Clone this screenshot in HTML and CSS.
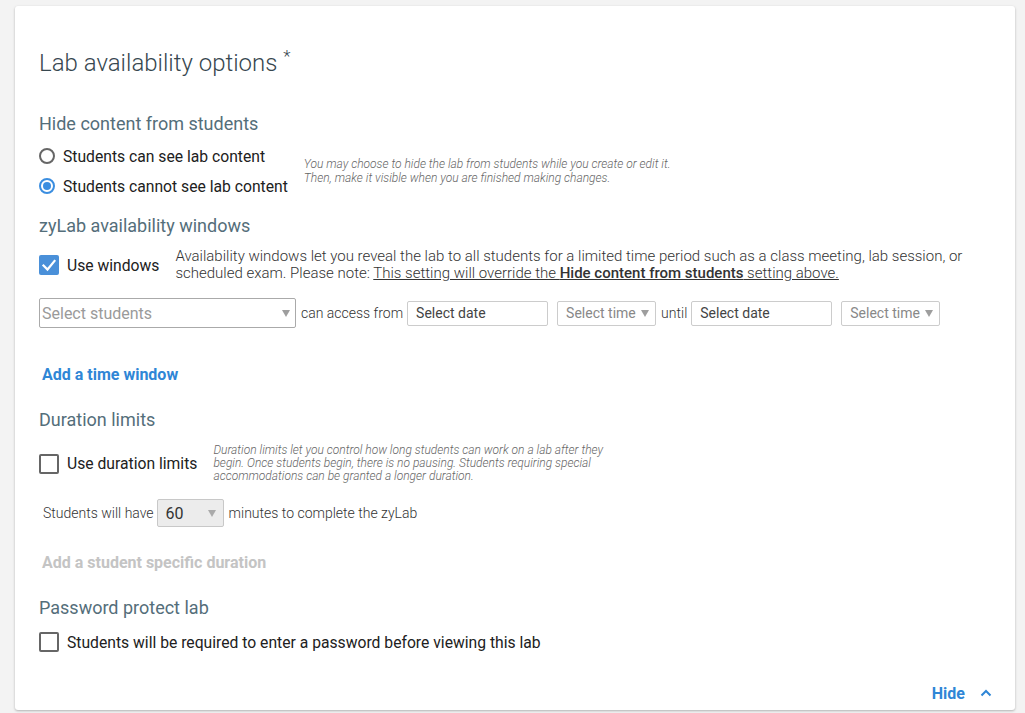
FILE: index.html
```html
<!DOCTYPE html>
<html lang="en">
<head>
<meta charset="utf-8">
<title>Lab availability options</title>
<link rel="stylesheet" href="styles.css">
</head>
<body>
<div class="card">
  <h1 class="title">Lab availability options <sup class="req">*</sup></h1>

  <h2 class="section-title first">Hide content from students</h2>
  <div class="hide-row">
    <div class="radios">
      <label class="radio"><span class="radio-circle"></span>Students can see lab content</label>
      <label class="radio"><span class="radio-circle checked"></span>Students cannot see lab content</label>
    </div>
    <p class="hint hint-hide">You may choose to hide the lab from students while you create or edit it.<br>Then, make it visible when you are finished making changes.</p>
  </div>

  <h2 class="section-title windows-title">zyLab availability windows</h2>
  <div class="windows-row">
    <label class="check"><span class="box checked"><svg viewBox="0 0 20 20" width="20" height="20"><polyline points="4.5,10.5 8.5,14.5 15.5,6" fill="none" stroke="#fff" stroke-width="2.2" stroke-linecap="square"/></svg></span>Use windows</label>
    <p class="desc">Availability windows let you reveal the lab to all students for a limited time period such as a class meeting, lab session, or scheduled exam. Please note: <span class="u">This setting will override the <b>Hide content from students</b> setting above.</span></p>
  </div>

  <div class="select-row">
    <div class="select students"><span>Select students</span><span class="arrow"></span></div>
    <span class="word">can access from</span>
    <div class="date">Select date</div>
    <div class="time"><span>Select time</span><span class="arrow"></span></div>
    <span class="word">until</span>
    <div class="date">Select date</div>
    <div class="time second"><span>Select time</span><span class="arrow"></span></div>
  </div>

  <a class="link add-window">Add a time window</a>

  <h2 class="section-title duration-title">Duration limits</h2>
  <div class="duration-row">
    <label class="check"><span class="box"></span>Use duration limits</label>
    <p class="hint hint-duration">Duration limits let you control how long students can work on a lab after they begin. Once students begin, there is no pausing. Students requiring special accommodations can be granted a longer duration.</p>
  </div>

  <div class="minutes-row">
    <span class="word">Students will have</span>
    <div class="minutes"><span>60</span><span class="arrow"></span></div>
    <span class="word">minutes to complete the zyLab</span>
  </div>

  <a class="link disabled add-duration">Add a student specific duration</a>

  <h2 class="section-title password-title">Password protect lab</h2>
  <label class="check password-check"><span class="box"></span>Students will be required to enter a password before viewing this lab</label>

  <div class="footer">
    <a class="link hide-link">Hide</a>
    <svg class="chevron" viewBox="0 0 12 8" width="12" height="8"><polyline points="1.5,6.5 6,2 10.5,6.5" fill="none" stroke="#2f86d6" stroke-width="2"/></svg>
  </div>
</div>
</body>
</html>
```

FILE: styles.css
```css
* { box-sizing: border-box; }

body {
  margin: 0;
  padding: 6px 10px 3px 15px;
  background: #f3f3f3;
  font-family: Roboto, "Liberation Sans", Arial, sans-serif;
  color: #212121;
}

.card {
  width: 1000px;
  height: 704px;
  background: #fff;
  border-radius: 3px;
  box-shadow: 0 1px 3px rgba(0,0,0,0.18), 0 1px 2px rgba(0,0,0,0.10);
  padding: 41px 23px 0 24px;
  display: flex;
  flex-direction: column;
  align-items: flex-start;
}

.title {
  margin: 0;
  font-size: 24px;
  line-height: 32px;
  font-weight: 300;
  color: #37474f;
}

.req {
  font-size: 17px;
  vertical-align: top;
  position: relative;
  top: -7px;
  margin-left: 0;
}

.section-title {
  margin: 0;
  font-size: 18px;
  line-height: 24px;
  font-weight: 400;
  color: #546e7a;
}

.section-title.first { margin-top: 33px; }
.windows-title { margin-top: 13px; }
.duration-title { margin-top: 23px; }
.password-title { margin-top: 23px; }

.hide-row {
  display: flex;
  align-items: center;
  gap: 16px;
  margin-top: 5px;
}

.radios { display: flex; flex-direction: column; }

.radio {
  display: flex;
  align-items: center;
  gap: 8px;
  height: 30px;
  font-size: 15.7px;
  color: #212121;
}

.radio-circle {
  width: 16px;
  height: 16px;
  border-radius: 50%;
  border: 2px solid #666;
  flex: none;
  position: relative;
}

.radio-circle.checked { border-color: #3b8ee0; }
.radio-circle.checked::after {
  content: "";
  position: absolute;
  left: 2px;
  top: 2px;
  width: 8px;
  height: 8px;
  border-radius: 50%;
  background: #3b8ee0;
}

.hint {
  margin: 0;
  font-size: 12px;
  font-style: italic;
  font-weight: 300;
  color: #666;
}

.hint-hide { line-height: 14px; }

.windows-row {
  display: flex;
  align-items: center;
  gap: 16px;
  margin-top: 10px;
}

.check {
  display: flex;
  align-items: center;
  gap: 8px;
  font-size: 15.7px;
  color: #212121;
  white-space: nowrap;
  flex: none;
}

.box {
  width: 20px;
  height: 20px;
  border: 2px solid #666;
  border-radius: 2px;
  flex: none;
  display: block;
}

.box.checked {
  border: none;
  background: #4a90d9;
}

.box svg { display: block; }

.desc {
  margin: 0;
  width: 800px;
  font-size: 15px;
  line-height: 17px;
  font-weight: 300;
  color: #333;
}

.u { text-decoration: underline; }
.u b { font-weight: 500; }

.select-row {
  display: flex;
  align-items: center;
  margin-top: 16px;
  height: 30px;
}

.word {
  font-size: 14px;
  font-weight: 300;
  color: #333;
  padding: 0 4px 0 5px;
}

.arrow {
  width: 0;
  height: 0;
  border-left: 4px solid transparent;
  border-right: 4px solid transparent;
  border-top: 7px solid #9e9e9e;
}

.select {
  display: flex;
  align-items: center;
  justify-content: space-between;
  border: 1px solid #aaa;
  border-radius: 2px;
  height: 30px;
  padding: 0 5px 0 2px;
  font-size: 16px;
  color: #9a9a9a;
}

.select.students { width: 257px; }

.date {
  width: 141px;
  height: 25px;
  border: 1px solid #ccc;
  border-radius: 2px;
  font-size: 14px;
  line-height: 23px;
  padding-left: 8px;
  color: #444;
}

.time {
  display: flex;
  align-items: center;
  justify-content: space-between;
  width: 99px;
  height: 25px;
  border: 1px solid #ccc;
  border-radius: 2px;
  font-size: 14px;
  padding: 0 6px 0 8px;
  color: #888;
  margin-left: 9px;
}

.link {
  font-size: 16px;
  line-height: 20px;
  font-weight: 700;
  color: #2f86d6;
  padding-left: 3px;
  cursor: pointer;
}

.add-window { margin-top: 37px; }

.link.disabled { color: #c4c4c4; }

.duration-row {
  display: flex;
  align-items: center;
  gap: 16px;
  margin-top: 12px;
}

.hint-duration {
  width: 410px;
  line-height: 13px;
}

.minutes-row {
  display: flex;
  align-items: center;
  margin-top: 16px;
  padding-left: 4px;
}

.minutes-row .word { padding: 0 3px 0 0; }
.minutes-row .word:last-child { padding: 0 0 0 5px; }

.minutes {
  display: flex;
  align-items: center;
  justify-content: space-between;
  width: 67px;
  height: 28px;
  border: 1px solid #c8c8c8;
  border-radius: 2px;
  background: #ececec;
  padding: 0 7px 0 8px;
  font-size: 16px;
  color: #333;
}

.minutes .arrow { border-top-color: #aaa; }

.add-duration { margin-top: 26px; }

.password-check {
  margin-top: 10px;
  height: 24px;
}

.footer {
  align-self: stretch;
  display: flex;
  justify-content: flex-end;
  align-items: center;
  gap: 15px;
  margin-top: 30px;
  height: 20px;
}

.hide-link { padding-left: 0; }

.chevron { display: block; margin-top: -2px; }
```
